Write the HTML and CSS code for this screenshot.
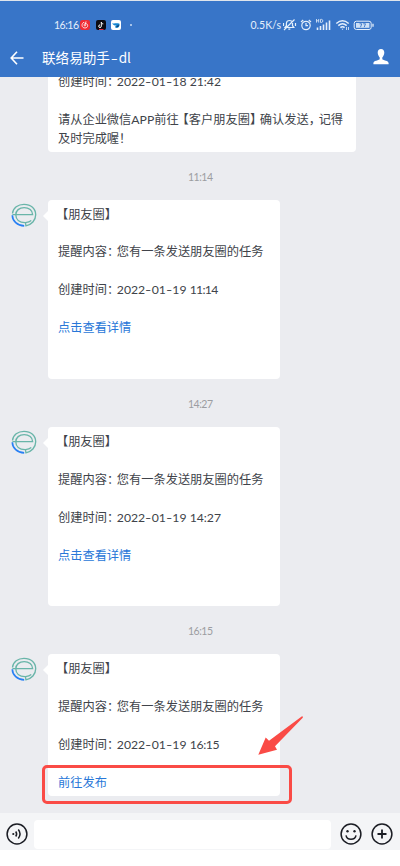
FILE: index.html
```html
<!DOCTYPE html>
<html lang="zh-CN">
<head>
<meta charset="utf-8">
<title>联络易助手-dl</title>
<link rel="stylesheet" href="styles.css">
</head>
<body>
<svg width="0" height="0" class="defs">
  <symbol id="avatar" viewBox="0 0 26 24">
    <g fill="none" stroke="#69b5a9" stroke-width="1.35">
      <path d="M1.5 10.5C2 5 7 1.3 13 1.3c7 0 11.7 4.5 11.7 10.5 0 5.5-4.2 10.1-9.8 11l-.4-3.1c2.3-.2 4.5-1 5.8-2.2"/>
      <path d="M1.4 11.6h20.2c0-4-3.6-7-8.4-7-5 0-8.4 3-8.4 7.2 0 4.7 3.5 7.8 9.2 7.9"/>
    </g>
    <path d="M1.3 12.2c.2 5.8 5 10.500 11.900 10.700" fill="none" stroke="#2880f4" stroke-width="1.6"/>
  </symbol>
</svg>
<div class="phone">
  <header class="header">
    <div class="status">
      <span class="clock">16:16</span>
      <svg class="app" viewBox="0 0 10 10"><rect width="10" height="10" rx="2" fill="#f02c34"/><path d="M4 2.2C1 3.500 1.500 8 5 8c3 0 3.700-3.700 1-4.500C4 3 3.500 6 5 6.200 6.500 6 5 3 5.300 2.200 5.600 1.500 6.500 2 6.500 2" fill="none" stroke="#fff" stroke-width=".8"/></svg>
      <svg class="app" viewBox="0 0 10 10"><rect width="10" height="10" rx="2" fill="#0c0b13"/><path d="M5.300 2v4.200a1.300 1.300 0 1 1-1.300-1.300M5.300 2.200c.3 1.300 1 1.700 2 1.700" fill="none" stroke="#fff" stroke-width="1"/><path d="M3 9.500h4.500" stroke="#e52b45"/></svg>
      <svg class="app" viewBox="0 0 10 10"><rect width="10" height="10" rx="2" fill="#fff"/><path d="M1 3.200C4 4 5 2.500 8.500 3.700 9 6 7.500 8 5.200 8 3.500 7.700 4 6 5.500 5.500 3.500 5.600 2 5 1 3.200z" fill="#1585d2"/><path d="M5 6.500l3-2-.8 2.700z" fill="#103f6d"/></svg>
      <span class="dot"></span>
      <span class="speed">0.5K/s</span>
      <svg class="sys" width="120" height="14" viewBox="0 0 120 14" fill="none" stroke="#e5effb">
        <path d="M2 9.500h8.800L9.500 7.700V5.200C9.200 1.600 3.800 1.600 3.400 5.200v2.500zM5.300 11.200h2M1 12L11.500 1.500M.5 5v3M12.500 5v3" stroke-width="1.200"/>
        <circle cx="23" cy="7.500" r="4.200" stroke-width="1.200"/><path d="M23 5v2.700h2M18 4l2.200-2M25.800 2L28 4" stroke-width="1.200"/>
        <path d="M33.500 1v3.600M33.500 2.800h2.200M35.700 1v3.600M37.500 1.400v3h1.200c1.500 0 1.500-3 0-3z" stroke-width=".8"/>
        <path d="M34.500 9.500V12M37.500 8v4M40.500 6.500V12M43.500 4.500V12M46.500 2.500V12" stroke-width="1.600"/>
        <path d="M53.300 5.500c3.800-3.300 8.600-3.300 12.400 0M55.300 7.600c2.500-2.200 5.900-2.200 8.400 0M57.400 9.600c1.200-1 3-1 4.200 0" stroke-width="1.500"/><path d="M58.500 10.700h2L59.500 12z" fill="#e5effb" stroke="none"/><path d="M63.500 9v3M65.500 9v3" stroke-width=".8"/>
        <rect x="71.200" y="3.200" width="17" height="8.300" rx="2.200"/><rect x="73" y="5" width="13.400" height="4.800" fill="#cfe1f6" stroke="none"/><path d="M90 5.800v3" stroke-width="1.300"/><path d="M76.500 5.800h2.300L77.500 9.200M80.200 5.800h2.300l-1.300 3.400" stroke="#3875c8" stroke-width=".9"/>
      </svg>
    </div>
    <div class="titlebar">
      <svg class="back" width="14" height="14" viewBox="0 0 14 14"><path d="M7 .8L1.200 7 7 13.200M1.200 7H13.500" fill="none" stroke="#fff" stroke-width="1.600"/></svg>
      <h1>联络易助手<span class="dash">-</span>dl</h1>
      <svg class="person" width="16" height="16" viewBox="0 0 16 16"><path d="M8 0C5.800 0 4.700 1.500 4.700 3.600c0 2 1 3.900 2 4.900v1.700C5 11.600.8 11.500.4 14v1.300h15.200V14c-.4-2.500-4.600-2.400-6.300-3.800V8.500c1-1 2-2.900 2-4.900C11.300 1.500 10.200 0 8 0z" fill="#fff"/></svg>
    </div>
  </header>
  <main class="chat">
    <div class="row first">
      <div class="card wide">
        <p>创建时间<span class="pc">：</span><span class="num">2022<i>-</i>01<i>-</i>18 21:42</span></p>
        <p class="gap">请从企业微信<span class="latin">APP</span>前往<span class="po">【</span>客户朋友圈<span class="pc">】</span>确认发送<span class="pc">，</span>记得<br>及时完成喔<span class="pc">！</span></p>
      </div>
    </div>
    <time>11:14</time>
    <div class="row">
      <svg class="avatar"><use href="#avatar"/></svg>
      <div class="card tail">
        <p><span class="po">【</span>朋友圈<span class="pc">】</span></p>
        <p class="gap">提醒内容<span class="pc">：</span>您有一条发送朋友圈的任务</p>
        <p class="gap">创建时间<span class="pc">：</span><span class="num">2022<i>-</i>01<i>-</i>19 <span class="ones">11:14</span></span></p>
        <p class="gap link blank">点击查看详情</p>
      </div>
    </div>
    <time>14:27</time>
    <div class="row">
      <svg class="avatar"><use href="#avatar"/></svg>
      <div class="card tail">
        <p><span class="po">【</span>朋友圈<span class="pc">】</span></p>
        <p class="gap">提醒内容<span class="pc">：</span>您有一条发送朋友圈的任务</p>
        <p class="gap">创建时间<span class="pc">：</span><span class="num">2022<i>-</i>01<i>-</i>19 14:27</span></p>
        <p class="gap link blank">点击查看详情</p>
      </div>
    </div>
    <time>16:15</time>
    <div class="row">
      <svg class="avatar"><use href="#avatar"/></svg>
      <div class="card tail">
        <p><span class="po">【</span>朋友圈<span class="pc">】</span></p>
        <p class="gap">提醒内容<span class="pc">：</span>您有一条发送朋友圈的任务</p>
        <p class="gap">创建时间<span class="pc">：</span><span class="num">2022<i>-</i>01<i>-</i>19 <span class="one">16:15</span></span></p>
        <p class="gap link">前往发布</p>
        <div class="highlight"></div>
        <svg class="arrow" width="46" height="40" viewBox="0 0 46 40"><path d="M44 .2c1 0 1.200 1 .5 1.700L17 30.300l2 3.500L.3 38.700 7.700 21.400l3.300 3.300z" fill="#fa4b46"/></svg>
      </div>
    </div>
  </main>
  <footer class="composer">
    <svg width="22" height="22" viewBox="0 0 22 22" fill="none" stroke="#1b1d24" stroke-width="1.500"><circle cx="11" cy="11" r="9.900"/><circle cx="7.300" cy="11" r="1.100" fill="#1b1d24" stroke="none"/><path d="M9.700 8.500q1.900 2.500 0 5M12.300 6.500q3.500 4.500 0 9"/></svg>
    <div class="input"></div>
    <svg width="22" height="22" viewBox="0 0 22 22" fill="none" stroke="#1b1d24" stroke-width="1.500"><circle cx="11" cy="11" r="9.900"/><circle cx="7.500" cy="8.300" r="1.200" fill="#1b1d24" stroke="none"/><circle cx="14.500" cy="8.300" r="1.200" fill="#1b1d24" stroke="none"/><path d="M6 12.300c1 5.200 9 5.200 10 0"/></svg>
    <svg class="plus" width="22" height="22" viewBox="0 0 22 22" fill="none" stroke="#1b1d24" stroke-width="1.500"><circle cx="11" cy="11" r="9.900"/><path d="M11 6.500v9M6.500 11h9" stroke-width="1.800"/></svg>
  </footer>
</div>
</body>
</html>
```

FILE: styles.css
```css
* { box-sizing: border-box; }
body { margin: 0; background: #fff; font-family: "Noto Sans CJK SC", sans-serif; }
h1, p { margin: 0; font-weight: 400; }
svg { display: block; flex: none; }
.defs { position: absolute; }
.phone { width: 400px; height: 850px; display: flex; flex-direction: column; border-top: 1px solid #dfe5ec; overflow: hidden; }
.header { height: 76px; flex: none; background: #3875c8; color: #fff; padding-top: 15px; }
.status { height: 18px; display: flex; align-items: center; padding-left: 54px; color: #e5effb; font-family: Lato, sans-serif; font-size: 11px; }
.clock { width: 26px; flex: none; font-size: 10.500px; letter-spacing: -0.500px; }
.app { width: 10px; height: 10px; margin-right: 5.5px; }
.dot { width: 2px; height: 2px; flex: none; margin-left: 3px; border-radius: 1px; background: #c9dcf4; }
.speed { margin-left: 119px; width: 32px; flex: none; font-size: 10.500px; }
.titlebar { height: 46px; display: flex; align-items: center; padding: 0 11px 0 10px; }
.back { margin-top: 1px; }
h1 { flex: 1; margin-left: 18px; font-size: 13.600px; line-height: 20px; }
.dash { display: inline-block; transform: scaleX(1.5); margin: 0 2px; }
.chat { position: relative; height: 736px; flex: none; overflow: hidden; background: #ebecf0; padding: 0 0 17px 10.500px; display: flex; flex-direction: column; justify-content: flex-end; }
.row { display: flex; flex: none; align-items: flex-start; }
.first { padding-left: 37.500px; }
.avatar { width: 26px; height: 24px; margin: 3px 11.500px 0 0; }
.card { position: relative; width: 232px; background: #fff; border-radius: 4px; padding: 5px 10px 4px; color: #40434a; font-size: 12.220px; line-height: 18.940px; white-space: nowrap; }
.wide { width: 308px; }
.tail::before { content: ""; position: absolute; left: -5px; top: 11px; border: 5px solid transparent; border-left: 0; border-right-color: #fff; }
.gap { margin-top: 18.940px; }
.blank { margin-bottom: 37.880px; }
.link { color: #2877d8; }
.pc { letter-spacing: -2.300px; }
.po { margin-left: -2.100px; }
.num, .latin { font-family: Lato, sans-serif; line-height: 0; }
.num i { display: inline-block; font-style: normal; width: 6.500px; line-height: 0; text-align: center; transform: scaleX(1.400); }
.ones { letter-spacing: -0.700px; }
.one { letter-spacing: -0.350px; }
time { flex: none; height: 48px; text-align: center; margin-left: -10px; font: 10.500px/51px Lato, sans-serif; letter-spacing: -0.500px; color: #9c9da1; }
.highlight { position: absolute; left: -6px; top: 111px; width: 250px; height: 39px; border: 3px solid #fa4b46; border-radius: 5px; }
.arrow { position: absolute; left: 210px; top: 62px; }
.composer { height: 37px; flex: none; background: #f4f5f7; display: flex; align-items: center; padding: 5px 7px 0 6px; }
.input { width: 297px; height: 29px; margin: 0 9px 0 6px; background: #fff; border-radius: 4px; }
.plus { margin-left: 9px; }
```
